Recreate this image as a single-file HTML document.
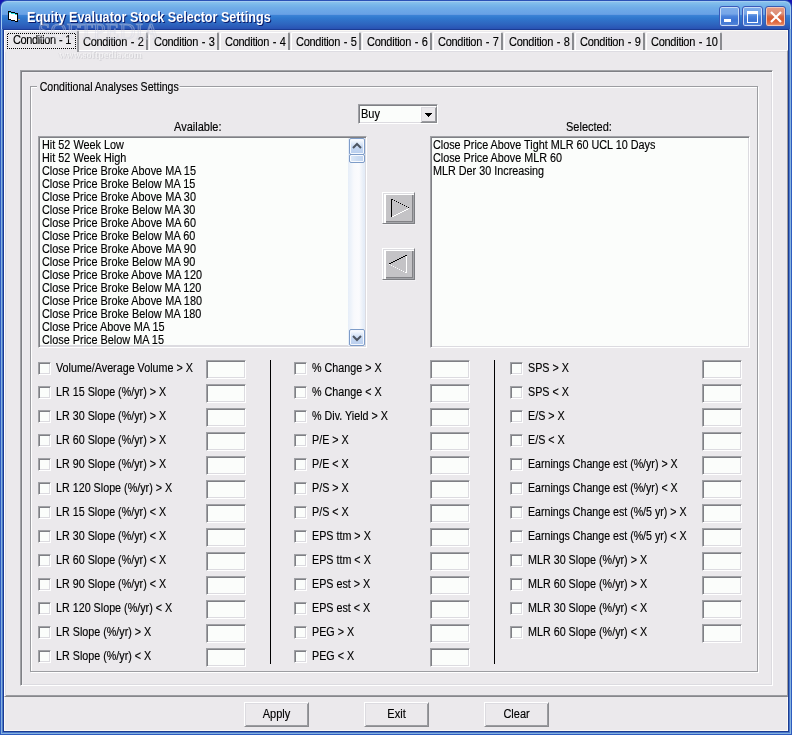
<!DOCTYPE html>
<html><head><meta charset="utf-8"><title>Equity Evaluator Stock Selector Settings</title>
<style>
*{margin:0;padding:0;box-sizing:content-box}
html,body{width:792px;height:735px;overflow:hidden;background:#1616B4}
body{position:relative;font-family:"Liberation Sans",sans-serif}
div{position:absolute}
.t{font-size:12px;line-height:13px;white-space:pre;color:#000;-webkit-text-stroke:0.15px #000;letter-spacing:0px;transform:scaleX(0.917);transform-origin:0 0}
.tab{letter-spacing:-0.3px;word-spacing:1px}
.sk{border:1px solid;border-color:#A0A1A5 #FFFFFF #FFFFFF #A0A1A5;box-shadow:inset 1px 1px 0 #7F8085,inset -1px -1px 0 #DCDBE0}
.rs{border:1px solid;border-color:#FFFFFF #8A8B8F #8A8B8F #FFFFFF;box-shadow:inset 1px 1px 0 #DCDBE0,inset -1px -1px 0 #9B9CA0}
.cb{border:1px solid;border-color:#A0A1A5 #FFFFFF #FFFFFF #A0A1A5;box-shadow:inset 1px 1px 0 #7F8085,inset -1px -1px 0 #DCDBE0;background:#FBFDFB}
</style></head>
<body>
<div style="left:0;top:0;width:792px;height:735px;will-change:transform">
<div style="left:0;top:0;width:792px;height:735px;border-radius:7px 7px 0 0;background:#2A52B6"></div>
<div style="left:1px;top:1px;width:790px;height:734px;border-radius:6px 6px 0 0;background:#A2CCF2"></div>
<div style="left:2px;top:2px;width:788px;height:28px;border-radius:5px 5px 0 0;background:linear-gradient(to bottom,#88C2EC 0px,#78B6EA 3px,#6FACE8 6px,#68A2E6 12px,#5F96E0 13px,#3C84D6 13px,#3078CE 16px,#2E66C0 22px,#2A56B6 26px,#2850B0 27px,#1C3C94 27px,#1C3C94 28px)"></div>
<div style="left:0px;top:29px;width:1px;height:706px;background:#2E5CC0"></div>
<div style="left:1px;top:29px;width:1px;height:706px;background:#86B2DE"></div>
<div style="left:2px;top:29px;width:1px;height:706px;background:#4A78CC"></div>
<div style="left:3px;top:29px;width:1px;height:706px;background:#1C3C90"></div>
<div style="left:788px;top:29px;width:1px;height:706px;background:#1C3C90"></div>
<div style="left:789px;top:29px;width:1px;height:706px;background:#4A78CC"></div>
<div style="left:790px;top:29px;width:1px;height:706px;background:#86B2DE"></div>
<div style="left:791px;top:29px;width:1px;height:706px;background:#2E5CC0"></div>
<div style="left:3px;top:731px;width:786px;height:1px;background:#1C3C90"></div>
<div style="left:2px;top:732px;width:788px;height:1px;background:#4A78CC"></div>
<div style="left:1px;top:733px;width:790px;height:1px;background:#86B2DE"></div>
<div style="left:0px;top:734px;width:792px;height:1px;background:#2E5CC0"></div>
<div style="left:4px;top:30px;width:782px;height:699px;background:#EBE9EC;border:1px solid #FBF9F5"></div>
<svg style="position:absolute;left:0;top:0" width="24" height="26" shape-rendering="crispEdges"><rect x="8" y="11" width="3" height="9" fill="#000"/><rect x="11" y="12" width="4" height="9" fill="#000"/><rect x="15" y="13" width="3" height="9" fill="#000"/><rect x="9" y="12" width="2" height="1" fill="#20E0E0"/><rect x="11" y="13" width="4" height="1" fill="#20E0E0"/><rect x="15" y="14" width="2" height="1" fill="#20E0E0"/><rect x="9" y="13" width="2" height="6" fill="#fff"/><rect x="11" y="14" width="4" height="6" fill="#fff"/><rect x="15" y="15" width="2" height="6" fill="#fff"/><rect x="18" y="19" width="2" height="1" fill="#B0A080"/></svg>
<div style="left:28px;top:10px;font-size:14px;line-height:16px;font-weight:bold;color:#0A1A6A;white-space:pre;transform:scaleX(0.9);transform-origin:0 0">Equity Evaluator Stock Selector Settings</div>
<div style="left:27px;top:9px;font-size:14px;line-height:16px;font-weight:bold;color:#fff;white-space:pre;transform:scaleX(0.9);transform-origin:0 0">Equity Evaluator Stock Selector Settings</div>
<div style="left:719px;top:6px;width:19px;height:19px;border:1px solid #3A5AB8;border-radius:3px;background:linear-gradient(to bottom,#80AEEA 0,#76A6E8 7px,#4C84DC 9px,#3C74D4 13px,#4A7ED6 17px,#6890DC 19px);box-shadow:inset 0 0 0 1px #C8DCF6"></div>
<div style="left:742px;top:6px;width:19px;height:19px;border:1px solid #3A5AB8;border-radius:3px;background:linear-gradient(to bottom,#80AEEA 0,#76A6E8 7px,#4C84DC 9px,#3C74D4 13px,#4A7ED6 17px,#6890DC 19px);box-shadow:inset 0 0 0 1px #C8DCF6"></div>
<div style="left:765px;top:6px;width:19px;height:19px;border:1px solid #3A5AB0;border-radius:3px;background:linear-gradient(to bottom,#E49A84 0,#DC8E76 7px,#D46A4A 9px,#D85A30 12px,#E07048 16px,#F0A080 19px);box-shadow:inset 0 0 0 1px #F2C8B8"></div>
<div style="left:724px;top:19px;width:7px;height:3px;background:#fff"></div>
<div style="left:747px;top:11px;width:9px;height:8px;border:1px solid #fff;border-top:3px solid #fff"></div>
<svg style="position:absolute;left:765px;top:6px" width="21" height="21" viewBox="0 0 21 21"><path d="M6 6L16 16M16 6L6 16" stroke="#fff" stroke-width="2.2"/></svg>
<div style="left:4px;top:50px;width:782px;height:645px;border-top:1px solid #fff;border-left:1px solid #fff;border-right:1px solid #9C9DA1;border-bottom:1px solid #86878B;box-shadow:inset 1px 1px 0 #DDDCE2,inset 0 -1px 0 #9A9BA0"></div>
<div style="left:78px;top:32px;width:67px;height:17px;border-top:1px solid #fff;border-left:1px solid #fff;border-right:2px solid #8A8B8F;border-radius:2px 2px 0 0"></div>
<div class="t" style="left:83px;top:36px;letter-spacing:-0.3px;word-spacing:1px">Condition - 2</div>
<div style="left:149px;top:32px;width:67px;height:17px;border-top:1px solid #fff;border-left:1px solid #fff;border-right:2px solid #8A8B8F;border-radius:2px 2px 0 0"></div>
<div class="t" style="left:154px;top:36px;letter-spacing:-0.3px;word-spacing:1px">Condition - 3</div>
<div style="left:220px;top:32px;width:67px;height:17px;border-top:1px solid #fff;border-left:1px solid #fff;border-right:2px solid #8A8B8F;border-radius:2px 2px 0 0"></div>
<div class="t" style="left:225px;top:36px;letter-spacing:-0.3px;word-spacing:1px">Condition - 4</div>
<div style="left:291px;top:32px;width:67px;height:17px;border-top:1px solid #fff;border-left:1px solid #fff;border-right:2px solid #8A8B8F;border-radius:2px 2px 0 0"></div>
<div class="t" style="left:296px;top:36px;letter-spacing:-0.3px;word-spacing:1px">Condition - 5</div>
<div style="left:362px;top:32px;width:67px;height:17px;border-top:1px solid #fff;border-left:1px solid #fff;border-right:2px solid #8A8B8F;border-radius:2px 2px 0 0"></div>
<div class="t" style="left:367px;top:36px;letter-spacing:-0.3px;word-spacing:1px">Condition - 6</div>
<div style="left:433px;top:32px;width:67px;height:17px;border-top:1px solid #fff;border-left:1px solid #fff;border-right:2px solid #8A8B8F;border-radius:2px 2px 0 0"></div>
<div class="t" style="left:438px;top:36px;letter-spacing:-0.3px;word-spacing:1px">Condition - 7</div>
<div style="left:504px;top:32px;width:67px;height:17px;border-top:1px solid #fff;border-left:1px solid #fff;border-right:2px solid #8A8B8F;border-radius:2px 2px 0 0"></div>
<div class="t" style="left:509px;top:36px;letter-spacing:-0.3px;word-spacing:1px">Condition - 8</div>
<div style="left:575px;top:32px;width:67px;height:17px;border-top:1px solid #fff;border-left:1px solid #fff;border-right:2px solid #8A8B8F;border-radius:2px 2px 0 0"></div>
<div class="t" style="left:580px;top:36px;letter-spacing:-0.3px;word-spacing:1px">Condition - 9</div>
<div style="left:646px;top:32px;width:73px;height:17px;border-top:1px solid #fff;border-left:1px solid #fff;border-right:2px solid #8A8B8F;border-radius:2px 2px 0 0"></div>
<div class="t" style="left:651px;top:36px;letter-spacing:-0.3px;word-spacing:1px">Condition - 10</div>
<div style="left:4px;top:30px;width:72px;height:21px;background:#EBE9EC;border-top:1px solid #fff;border-left:1px solid #fff;border-right:2px solid #9B9CA0;border-radius:2px 2px 0 0"></div>
<div class="t" style="left:13px;top:34px;letter-spacing:-0.45px;word-spacing:0.5px">Condition - 1</div>
<svg style="position:absolute;left:0;top:0" width="80" height="52" shape-rendering="crispEdges"><rect x="7" y="48" width="1" height="1"/><rect x="8" y="33" width="1" height="1"/><rect x="9" y="48" width="1" height="1"/><rect x="10" y="33" width="1" height="1"/><rect x="11" y="48" width="1" height="1"/><rect x="12" y="33" width="1" height="1"/><rect x="13" y="48" width="1" height="1"/><rect x="14" y="33" width="1" height="1"/><rect x="15" y="48" width="1" height="1"/><rect x="16" y="33" width="1" height="1"/><rect x="17" y="48" width="1" height="1"/><rect x="18" y="33" width="1" height="1"/><rect x="19" y="48" width="1" height="1"/><rect x="20" y="33" width="1" height="1"/><rect x="21" y="48" width="1" height="1"/><rect x="22" y="33" width="1" height="1"/><rect x="23" y="48" width="1" height="1"/><rect x="24" y="33" width="1" height="1"/><rect x="25" y="48" width="1" height="1"/><rect x="26" y="33" width="1" height="1"/><rect x="27" y="48" width="1" height="1"/><rect x="28" y="33" width="1" height="1"/><rect x="29" y="48" width="1" height="1"/><rect x="30" y="33" width="1" height="1"/><rect x="31" y="48" width="1" height="1"/><rect x="32" y="33" width="1" height="1"/><rect x="33" y="48" width="1" height="1"/><rect x="34" y="33" width="1" height="1"/><rect x="35" y="48" width="1" height="1"/><rect x="36" y="33" width="1" height="1"/><rect x="37" y="48" width="1" height="1"/><rect x="38" y="33" width="1" height="1"/><rect x="39" y="48" width="1" height="1"/><rect x="40" y="33" width="1" height="1"/><rect x="41" y="48" width="1" height="1"/><rect x="42" y="33" width="1" height="1"/><rect x="43" y="48" width="1" height="1"/><rect x="44" y="33" width="1" height="1"/><rect x="45" y="48" width="1" height="1"/><rect x="46" y="33" width="1" height="1"/><rect x="47" y="48" width="1" height="1"/><rect x="48" y="33" width="1" height="1"/><rect x="49" y="48" width="1" height="1"/><rect x="50" y="33" width="1" height="1"/><rect x="51" y="48" width="1" height="1"/><rect x="52" y="33" width="1" height="1"/><rect x="53" y="48" width="1" height="1"/><rect x="54" y="33" width="1" height="1"/><rect x="55" y="48" width="1" height="1"/><rect x="56" y="33" width="1" height="1"/><rect x="57" y="48" width="1" height="1"/><rect x="58" y="33" width="1" height="1"/><rect x="59" y="48" width="1" height="1"/><rect x="60" y="33" width="1" height="1"/><rect x="61" y="48" width="1" height="1"/><rect x="62" y="33" width="1" height="1"/><rect x="63" y="48" width="1" height="1"/><rect x="64" y="33" width="1" height="1"/><rect x="65" y="48" width="1" height="1"/><rect x="66" y="33" width="1" height="1"/><rect x="67" y="48" width="1" height="1"/><rect x="68" y="33" width="1" height="1"/><rect x="69" y="48" width="1" height="1"/><rect x="70" y="33" width="1" height="1"/><rect x="71" y="48" width="1" height="1"/><rect x="72" y="33" width="1" height="1"/><rect x="73" y="48" width="1" height="1"/><rect x="74" y="33" width="1" height="1"/><rect x="75" y="48" width="1" height="1"/><rect x="7" y="34" width="1" height="1"/><rect x="75" y="34" width="1" height="1"/><rect x="7" y="36" width="1" height="1"/><rect x="75" y="36" width="1" height="1"/><rect x="7" y="38" width="1" height="1"/><rect x="75" y="38" width="1" height="1"/><rect x="7" y="40" width="1" height="1"/><rect x="75" y="40" width="1" height="1"/><rect x="7" y="42" width="1" height="1"/><rect x="75" y="42" width="1" height="1"/><rect x="7" y="44" width="1" height="1"/><rect x="75" y="44" width="1" height="1"/><rect x="7" y="46" width="1" height="1"/><rect x="75" y="46" width="1" height="1"/></svg>
<div style="left:20px;top:70px;width:751px;height:614px;border-top:1px solid #A0A1A5;border-left:1px solid #A0A1A5;border-right:1px solid #fff;border-bottom:1px solid #fff;box-shadow:inset 1px 1px 0 #7F8085,inset 2px 2px 0 #F0EFF2,inset -1px -1px 0 #DCDBE0"></div>
<div style="left:30px;top:86px;width:726px;height:584px;border:1px solid #9C9DA1;box-shadow:1px 1px 0 #fff,inset 1px 1px 0 #fff"></div>
<div class="t" style="left:37px;top:81px;background:#EBE9EC;padding:0 1px 0 3px;transform:scaleX(0.88)">Conditional Analyses Settings</div>
<div class="sk" style="left:358px;top:104px;width:78px;height:18px;background:#FBFDFB"></div>
<div class="t" style="left:361px;top:108px;">Buy</div>
<div class="rs" style="left:420px;top:106px;width:15px;height:15px;background:#EBE9EC"></div>
<svg style="position:absolute;left:425px;top:113px" width="7" height="4" shape-rendering="crispEdges"><rect x="0" y="0" width="7" height="1"/><rect x="1" y="1" width="5" height="1"/><rect x="2" y="2" width="3" height="1"/><rect x="3" y="3" width="1" height="1"/></svg>
<div class="t" style="left:174px;top:121px;">Available:</div>
<div class="t" style="left:566px;top:121px;">Selected:</div>
<div class="sk" style="left:38px;top:136px;width:327px;height:210px;background:#FBFDFB"></div>
<div class="t" style="left:42px;top:139px;transform:scaleX(0.905)">Hit 52 Week Low</div>
<div class="t" style="left:42px;top:152px;transform:scaleX(0.905)">Hit 52 Week High</div>
<div class="t" style="left:42px;top:165px;transform:scaleX(0.905)">Close Price Broke Above MA 15</div>
<div class="t" style="left:42px;top:178px;transform:scaleX(0.905)">Close Price Broke Below MA 15</div>
<div class="t" style="left:42px;top:191px;transform:scaleX(0.905)">Close Price Broke Above MA 30</div>
<div class="t" style="left:42px;top:204px;transform:scaleX(0.905)">Close Price Broke Below MA 30</div>
<div class="t" style="left:42px;top:217px;transform:scaleX(0.905)">Close Price Broke Above MA 60</div>
<div class="t" style="left:42px;top:230px;transform:scaleX(0.905)">Close Price Broke Below MA 60</div>
<div class="t" style="left:42px;top:243px;transform:scaleX(0.905)">Close Price Broke Above MA 90</div>
<div class="t" style="left:42px;top:256px;transform:scaleX(0.905)">Close Price Broke Below MA 90</div>
<div class="t" style="left:42px;top:269px;transform:scaleX(0.905)">Close Price Broke Above MA 120</div>
<div class="t" style="left:42px;top:282px;transform:scaleX(0.905)">Close Price Broke Below MA 120</div>
<div class="t" style="left:42px;top:295px;transform:scaleX(0.905)">Close Price Broke Above MA 180</div>
<div class="t" style="left:42px;top:308px;transform:scaleX(0.905)">Close Price Broke Below MA 180</div>
<div class="t" style="left:42px;top:321px;transform:scaleX(0.905)">Close Price Above MA 15</div>
<div class="t" style="left:42px;top:334px;transform:scaleX(0.905)">Close Price Below MA 15</div>
<div style="left:40px;top:345px;width:308px;height:1px;background:#DCDBE0"></div>
<div style="left:348px;top:138px;width:17px;height:208px;background:linear-gradient(to right,#E6EEF8 0,#EEF3FA 3px,#F8F9FC 6px,#FBFBFD 11px,#E4ECF7 16px)"></div>
<div style="left:349px;top:138px;width:14px;height:15px;border:1px solid #7E9CC8;border-radius:2px;box-shadow:inset 0 0 0 1px #F4F8FE;background:linear-gradient(to bottom,#FFFFFF 0,#E2ECFA 4px,#C6D8F2 8px,#B9CEEE 15px)"></div>
<svg style="position:absolute;left:349px;top:138px" width="16" height="17"><path d="M4 10L8 6L12 10" stroke="#4D5562" stroke-width="2" fill="none"/></svg>
<div style="left:349px;top:154px;width:14px;height:7px;border:1px solid #7E9CC8;border-radius:2px;box-shadow:inset 0 0 0 1px #F8FAFE;background:linear-gradient(to right,#E0EAF8,#CCDCF2 50%,#C0D4F0)"></div>
<div style="left:349px;top:329px;width:14px;height:15px;border:1px solid #7E9CC8;border-radius:2px;box-shadow:inset 0 0 0 1px #F4F8FE;background:linear-gradient(to bottom,#FFFFFF 0,#E2ECFA 4px,#C6D8F2 8px,#B9CEEE 15px)"></div>
<svg style="position:absolute;left:349px;top:329px" width="16" height="17"><path d="M4 7L8 11L12 7" stroke="#4D5562" stroke-width="2" fill="none"/></svg>
<div class="sk" style="left:430px;top:136px;width:318px;height:210px;background:#FBFDFB"></div>
<div class="t" style="left:433px;top:139px;transform:scaleX(0.90)">Close Price Above Tight MLR 60 UCL 10 Days</div>
<div class="t" style="left:433px;top:152px;transform:scaleX(0.90)">Close Price Above MLR 60</div>
<div class="t" style="left:433px;top:165px;transform:scaleX(0.90)">MLR Der 30 Increasing</div>
<div style="left:382px;top:192px;width:31px;height:30px;background:#C4C3C6;border:1px solid;border-color:#fff #7E7F83 #7E7F83 #fff;box-shadow:inset 1px 1px 0 #DCDCE0,inset 2px 2px 0 #fff,inset 3px 0 0 #fff,inset -1px -1px 0 #A5A6AA,inset -2px -2px 0 #828286"></div>
<div style="left:382px;top:224px;width:34px;height:1px;background:#F2F1F4"></div>
<svg style="position:absolute;left:382px;top:192px" width="33" height="33" shape-rendering="crispEdges"><rect x="9" y="7" width="1" height="18" fill="#000"/><rect x="10" y="7" width="1" height="1" fill="#000"/><rect x="12" y="8" width="1" height="1" fill="#000"/><rect x="14" y="9" width="1" height="1" fill="#000"/><rect x="16" y="10" width="1" height="1" fill="#000"/><rect x="18" y="11" width="1" height="1" fill="#000"/><rect x="20" y="12" width="1" height="1" fill="#000"/><rect x="22" y="13" width="1" height="1" fill="#000"/><rect x="24" y="14" width="1" height="1" fill="#000"/><rect x="26" y="15" width="1" height="1" fill="#000"/><rect x="10" y="24" width="2" height="1" fill="#fff"/><rect x="12" y="23" width="2" height="1" fill="#fff"/><rect x="14" y="22" width="2" height="1" fill="#fff"/><rect x="16" y="21" width="2" height="1" fill="#fff"/><rect x="18" y="20" width="2" height="1" fill="#fff"/><rect x="20" y="19" width="2" height="1" fill="#fff"/><rect x="22" y="18" width="2" height="1" fill="#fff"/><rect x="24" y="17" width="2" height="1" fill="#fff"/><rect x="26" y="16" width="1" height="1" fill="#fff"/></svg>
<div style="left:382px;top:248px;width:31px;height:30px;background:#C4C3C6;border:1px solid;border-color:#fff #7E7F83 #7E7F83 #fff;box-shadow:inset 1px 1px 0 #DCDCE0,inset 2px 2px 0 #fff,inset 3px 0 0 #fff,inset -1px -1px 0 #A5A6AA,inset -2px -2px 0 #828286"></div>
<div style="left:382px;top:280px;width:34px;height:1px;background:#F2F1F4"></div>
<svg style="position:absolute;left:382px;top:248px" width="33" height="33" shape-rendering="crispEdges"><rect x="7" y="15" width="2" height="1" fill="#000"/><rect x="9" y="14" width="2" height="1" fill="#000"/><rect x="11" y="13" width="2" height="1" fill="#000"/><rect x="13" y="12" width="2" height="1" fill="#000"/><rect x="15" y="11" width="2" height="1" fill="#000"/><rect x="17" y="10" width="2" height="1" fill="#000"/><rect x="19" y="9" width="2" height="1" fill="#000"/><rect x="21" y="8" width="2" height="1" fill="#000"/><rect x="23" y="7" width="2" height="1" fill="#000"/><rect x="24" y="8" width="1" height="17" fill="#fff"/><rect x="23" y="24" width="1" height="1" fill="#fff"/><rect x="7" y="16" width="1" height="1" fill="#fff"/><rect x="9" y="17" width="1" height="1" fill="#fff"/><rect x="11" y="18" width="1" height="1" fill="#fff"/><rect x="13" y="19" width="1" height="1" fill="#fff"/><rect x="15" y="20" width="1" height="1" fill="#fff"/><rect x="17" y="21" width="1" height="1" fill="#fff"/><rect x="19" y="22" width="1" height="1" fill="#fff"/><rect x="21" y="23" width="1" height="1" fill="#fff"/></svg>
<div class="cb" style="left:38px;top:362px;width:11px;height:11px"></div>
<div class="t" style="left:56px;top:362px;transform:scaleX(0.895)">Volume/Average Volume &gt; X</div>
<div class="sk" style="left:206px;top:360px;width:38px;height:17px;background:#FBFDFB"></div>
<div class="cb" style="left:38px;top:386px;width:11px;height:11px"></div>
<div class="t" style="left:56px;top:386px;transform:scaleX(0.895)">LR 15 Slope (%/yr) &gt; X</div>
<div class="sk" style="left:206px;top:384px;width:38px;height:17px;background:#FBFDFB"></div>
<div class="cb" style="left:38px;top:410px;width:11px;height:11px"></div>
<div class="t" style="left:56px;top:410px;transform:scaleX(0.895)">LR 30 Slope (%/yr) &gt; X</div>
<div class="sk" style="left:206px;top:408px;width:38px;height:17px;background:#FBFDFB"></div>
<div class="cb" style="left:38px;top:434px;width:11px;height:11px"></div>
<div class="t" style="left:56px;top:434px;transform:scaleX(0.895)">LR 60 Slope (%/yr) &gt; X</div>
<div class="sk" style="left:206px;top:432px;width:38px;height:17px;background:#FBFDFB"></div>
<div class="cb" style="left:38px;top:458px;width:11px;height:11px"></div>
<div class="t" style="left:56px;top:458px;transform:scaleX(0.895)">LR 90 Slope (%/yr) &gt; X</div>
<div class="sk" style="left:206px;top:456px;width:38px;height:17px;background:#FBFDFB"></div>
<div class="cb" style="left:38px;top:482px;width:11px;height:11px"></div>
<div class="t" style="left:56px;top:482px;transform:scaleX(0.895)">LR 120 Slope (%/yr) &gt; X</div>
<div class="sk" style="left:206px;top:480px;width:38px;height:17px;background:#FBFDFB"></div>
<div class="cb" style="left:38px;top:506px;width:11px;height:11px"></div>
<div class="t" style="left:56px;top:506px;transform:scaleX(0.895)">LR 15 Slope (%/yr) &lt; X</div>
<div class="sk" style="left:206px;top:504px;width:38px;height:17px;background:#FBFDFB"></div>
<div class="cb" style="left:38px;top:530px;width:11px;height:11px"></div>
<div class="t" style="left:56px;top:530px;transform:scaleX(0.895)">LR 30 Slope (%/yr) &lt; X</div>
<div class="sk" style="left:206px;top:528px;width:38px;height:17px;background:#FBFDFB"></div>
<div class="cb" style="left:38px;top:554px;width:11px;height:11px"></div>
<div class="t" style="left:56px;top:554px;transform:scaleX(0.895)">LR 60 Slope (%/yr) &lt; X</div>
<div class="sk" style="left:206px;top:552px;width:38px;height:17px;background:#FBFDFB"></div>
<div class="cb" style="left:38px;top:578px;width:11px;height:11px"></div>
<div class="t" style="left:56px;top:578px;transform:scaleX(0.895)">LR 90 Slope (%/yr) &lt; X</div>
<div class="sk" style="left:206px;top:576px;width:38px;height:17px;background:#FBFDFB"></div>
<div class="cb" style="left:38px;top:602px;width:11px;height:11px"></div>
<div class="t" style="left:56px;top:602px;transform:scaleX(0.895)">LR 120 Slope (%/yr) &lt; X</div>
<div class="sk" style="left:206px;top:600px;width:38px;height:17px;background:#FBFDFB"></div>
<div class="cb" style="left:38px;top:626px;width:11px;height:11px"></div>
<div class="t" style="left:56px;top:626px;transform:scaleX(0.895)">LR Slope (%/yr) &gt; X</div>
<div class="sk" style="left:206px;top:624px;width:38px;height:17px;background:#FBFDFB"></div>
<div class="cb" style="left:38px;top:650px;width:11px;height:11px"></div>
<div class="t" style="left:56px;top:650px;transform:scaleX(0.895)">LR Slope (%/yr) &lt; X</div>
<div class="sk" style="left:206px;top:648px;width:38px;height:17px;background:#FBFDFB"></div>
<div class="cb" style="left:294px;top:362px;width:11px;height:11px"></div>
<div class="t" style="left:312px;top:362px;transform:scaleX(0.895)">% Change &gt; X</div>
<div class="sk" style="left:430px;top:360px;width:38px;height:17px;background:#FBFDFB"></div>
<div class="cb" style="left:294px;top:386px;width:11px;height:11px"></div>
<div class="t" style="left:312px;top:386px;transform:scaleX(0.895)">% Change &lt; X</div>
<div class="sk" style="left:430px;top:384px;width:38px;height:17px;background:#FBFDFB"></div>
<div class="cb" style="left:294px;top:410px;width:11px;height:11px"></div>
<div class="t" style="left:312px;top:410px;transform:scaleX(0.895)">% Div. Yield &gt; X</div>
<div class="sk" style="left:430px;top:408px;width:38px;height:17px;background:#FBFDFB"></div>
<div class="cb" style="left:294px;top:434px;width:11px;height:11px"></div>
<div class="t" style="left:312px;top:434px;transform:scaleX(0.895)">P/E &gt; X</div>
<div class="sk" style="left:430px;top:432px;width:38px;height:17px;background:#FBFDFB"></div>
<div class="cb" style="left:294px;top:458px;width:11px;height:11px"></div>
<div class="t" style="left:312px;top:458px;transform:scaleX(0.895)">P/E &lt; X</div>
<div class="sk" style="left:430px;top:456px;width:38px;height:17px;background:#FBFDFB"></div>
<div class="cb" style="left:294px;top:482px;width:11px;height:11px"></div>
<div class="t" style="left:312px;top:482px;transform:scaleX(0.895)">P/S &gt; X</div>
<div class="sk" style="left:430px;top:480px;width:38px;height:17px;background:#FBFDFB"></div>
<div class="cb" style="left:294px;top:506px;width:11px;height:11px"></div>
<div class="t" style="left:312px;top:506px;transform:scaleX(0.895)">P/S &lt; X</div>
<div class="sk" style="left:430px;top:504px;width:38px;height:17px;background:#FBFDFB"></div>
<div class="cb" style="left:294px;top:530px;width:11px;height:11px"></div>
<div class="t" style="left:312px;top:530px;transform:scaleX(0.895)">EPS ttm &gt; X</div>
<div class="sk" style="left:430px;top:528px;width:38px;height:17px;background:#FBFDFB"></div>
<div class="cb" style="left:294px;top:554px;width:11px;height:11px"></div>
<div class="t" style="left:312px;top:554px;transform:scaleX(0.895)">EPS ttm &lt; X</div>
<div class="sk" style="left:430px;top:552px;width:38px;height:17px;background:#FBFDFB"></div>
<div class="cb" style="left:294px;top:578px;width:11px;height:11px"></div>
<div class="t" style="left:312px;top:578px;transform:scaleX(0.895)">EPS est &gt; X</div>
<div class="sk" style="left:430px;top:576px;width:38px;height:17px;background:#FBFDFB"></div>
<div class="cb" style="left:294px;top:602px;width:11px;height:11px"></div>
<div class="t" style="left:312px;top:602px;transform:scaleX(0.895)">EPS est &lt; X</div>
<div class="sk" style="left:430px;top:600px;width:38px;height:17px;background:#FBFDFB"></div>
<div class="cb" style="left:294px;top:626px;width:11px;height:11px"></div>
<div class="t" style="left:312px;top:626px;transform:scaleX(0.895)">PEG &gt; X</div>
<div class="sk" style="left:430px;top:624px;width:38px;height:17px;background:#FBFDFB"></div>
<div class="cb" style="left:294px;top:650px;width:11px;height:11px"></div>
<div class="t" style="left:312px;top:650px;transform:scaleX(0.895)">PEG &lt; X</div>
<div class="sk" style="left:430px;top:648px;width:38px;height:17px;background:#FBFDFB"></div>
<div class="cb" style="left:510px;top:362px;width:11px;height:11px"></div>
<div class="t" style="left:528px;top:362px;transform:scaleX(0.895)">SPS &gt; X</div>
<div class="sk" style="left:702px;top:360px;width:38px;height:17px;background:#FBFDFB"></div>
<div class="cb" style="left:510px;top:386px;width:11px;height:11px"></div>
<div class="t" style="left:528px;top:386px;transform:scaleX(0.895)">SPS &lt; X</div>
<div class="sk" style="left:702px;top:384px;width:38px;height:17px;background:#FBFDFB"></div>
<div class="cb" style="left:510px;top:410px;width:11px;height:11px"></div>
<div class="t" style="left:528px;top:410px;transform:scaleX(0.895)">E/S &gt; X</div>
<div class="sk" style="left:702px;top:408px;width:38px;height:17px;background:#FBFDFB"></div>
<div class="cb" style="left:510px;top:434px;width:11px;height:11px"></div>
<div class="t" style="left:528px;top:434px;transform:scaleX(0.895)">E/S &lt; X</div>
<div class="sk" style="left:702px;top:432px;width:38px;height:17px;background:#FBFDFB"></div>
<div class="cb" style="left:510px;top:458px;width:11px;height:11px"></div>
<div class="t" style="left:528px;top:458px;transform:scaleX(0.885)">Earnings Change est (%/yr) &gt; X</div>
<div class="sk" style="left:702px;top:456px;width:38px;height:17px;background:#FBFDFB"></div>
<div class="cb" style="left:510px;top:482px;width:11px;height:11px"></div>
<div class="t" style="left:528px;top:482px;transform:scaleX(0.885)">Earnings Change est (%/yr) &lt; X</div>
<div class="sk" style="left:702px;top:480px;width:38px;height:17px;background:#FBFDFB"></div>
<div class="cb" style="left:510px;top:506px;width:11px;height:11px"></div>
<div class="t" style="left:528px;top:506px;transform:scaleX(0.885)">Earnings Change est (%/5 yr) &gt; X</div>
<div class="sk" style="left:702px;top:504px;width:38px;height:17px;background:#FBFDFB"></div>
<div class="cb" style="left:510px;top:530px;width:11px;height:11px"></div>
<div class="t" style="left:528px;top:530px;transform:scaleX(0.885)">Earnings Change est (%/5 yr) &lt; X</div>
<div class="sk" style="left:702px;top:528px;width:38px;height:17px;background:#FBFDFB"></div>
<div class="cb" style="left:510px;top:554px;width:11px;height:11px"></div>
<div class="t" style="left:528px;top:554px;transform:scaleX(0.895)">MLR 30 Slope (%/yr) &gt; X</div>
<div class="sk" style="left:702px;top:552px;width:38px;height:17px;background:#FBFDFB"></div>
<div class="cb" style="left:510px;top:578px;width:11px;height:11px"></div>
<div class="t" style="left:528px;top:578px;transform:scaleX(0.895)">MLR 60 Slope (%/yr) &gt; X</div>
<div class="sk" style="left:702px;top:576px;width:38px;height:17px;background:#FBFDFB"></div>
<div class="cb" style="left:510px;top:602px;width:11px;height:11px"></div>
<div class="t" style="left:528px;top:602px;transform:scaleX(0.895)">MLR 30 Slope (%/yr) &lt; X</div>
<div class="sk" style="left:702px;top:600px;width:38px;height:17px;background:#FBFDFB"></div>
<div class="cb" style="left:510px;top:626px;width:11px;height:11px"></div>
<div class="t" style="left:528px;top:626px;transform:scaleX(0.895)">MLR 60 Slope (%/yr) &lt; X</div>
<div class="sk" style="left:702px;top:624px;width:38px;height:17px;background:#FBFDFB"></div>
<div style="left:270px;top:360px;width:1px;height:304px;background:#000"></div>
<div style="left:494px;top:360px;width:1px;height:304px;background:#000"></div>
<div class="rs" style="left:244px;top:702px;width:63px;height:23px;background:#EBE9EC"></div>
<div class="t" style="left:244px;top:708px;width:71px;text-align:center">Apply</div>
<div class="rs" style="left:364px;top:702px;width:63px;height:23px;background:#EBE9EC"></div>
<div class="t" style="left:364px;top:708px;width:71px;text-align:center">Exit</div>
<div class="rs" style="left:484px;top:702px;width:63px;height:23px;background:#EBE9EC"></div>
<div class="t" style="left:484px;top:708px;width:71px;text-align:center">Clear</div>
<div style="left:38px;top:21px;font-family:'Liberation Serif',serif;font-size:22.5px;line-height:22px;white-space:pre;color:rgba(255,255,255,0.08);-webkit-text-stroke:1px rgba(210,212,225,0.42)">SOFTPEDIA</div>
<div style="left:59px;top:50px;font-family:'Liberation Serif',serif;font-size:10px;font-weight:bold;line-height:10px;white-space:pre;color:rgba(255,255,255,0.55);text-shadow:1px 1px 0 rgba(150,150,160,0.22),-1px 0 0 rgba(150,150,160,0.12)">www.softpedia.com</div>
</div>
</body></html>
